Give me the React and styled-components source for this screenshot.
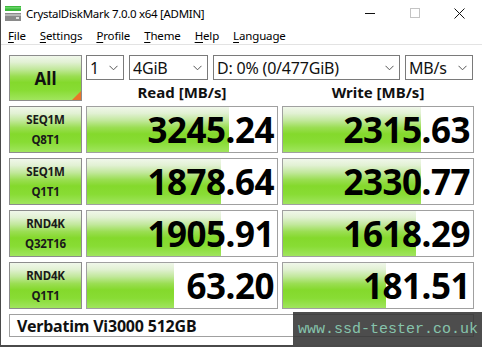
import React from "react";
import styled, { createGlobalStyle } from "styled-components";

const Global = createGlobalStyle`
  html, body { margin: 0; padding: 0; background: #ffffff; }
  body { font-family: "Noto Sans", "Open Sans", sans-serif; color: #000; }
`;

const Window = styled.div`
  position: relative;
  width: 482px;
  height: 347px;
  box-sizing: border-box;
  background: #ffffff;
  border-left: 1px solid #4a4a4a;
  border-bottom: 2px solid #4a4a4a;
  overflow: hidden;
  display: flex;
  flex-direction: column;
`;

const TitleBar = styled.div`
  height: 26px;
  display: flex;
  align-items: center;
  padding-left: 4px;
`;

const TitleText = styled.span`
  margin-left: 5px;
  font-size: 11.5px;
  color: #000;
  flex: 1;
  letter-spacing: -0.3px;
`;

const WinButton = styled.div`
  width: 45px;
  height: 26px;
  display: flex;
  align-items: center;
  justify-content: center;
`;

const MenuBar = styled.div`
  height: 18px;
  display: flex;
  align-items: center;
  gap: 14px;
  padding-left: 7px;
  border-bottom: 1px solid #e3e3e3;
`;

const MenuItem = styled.span`
  font-size: 11.5px;
  letter-spacing: -0.15px;
  u { text-decoration: underline; text-underline-offset: 2px; }
`;

const Content = styled.div`
  display: grid;
  grid-template-columns: 73px 192px 192px;
  grid-template-rows: 46px repeat(4, 47px) 23px;
  column-gap: 4px;
  row-gap: 5px;
  padding: 10px 0 0 8px;
`;

const greenGrad = `linear-gradient(to bottom, #f0f7ea 0%, #e2f1d4 14%, #c2e89c 30%, #9ade52 46%, #84d92c 60%, #88dc34 78%, #a0e55e 100%)`;

const AllButton = styled.div`
  position: relative;
  box-sizing: border-box;
  border: 1px solid #8c8c8c;
  background: ${greenGrad};
  display: flex;
  align-items: center;
  justify-content: center;
  font-weight: 700;
  font-size: 17px;
  color: #111;
  overflow: hidden;
  &::after {
    content: "";
    position: absolute;
    right: 0;
    bottom: 0;
    border-style: solid;
    border-width: 0 0 9px 9px;
    border-color: transparent transparent #e8762a transparent;
  }
`;

const TopRight = styled.div`
  grid-column: 2 / 4;
  display: grid;
  grid-template-columns: 192px 192px;
  grid-template-rows: 25px 21px;
  column-gap: 4px;
`;

const Combos = styled.div`
  grid-column: 1 / 3;
  display: flex;
  gap: 5px;
`;

const Combo = styled.div`
  box-sizing: border-box;
  width: ${(p) => p.$w}px;
  height: 25px;
  border: 1px solid #7a7a7a;
  background: #fff;
  display: flex;
  align-items: center;
  padding-left: 3px;
  padding-right: 5px;
  font-size: 16px;
  letter-spacing: -0.2px;
  color: #111;
  span { flex: 1; white-space: nowrap; }
`;

const Header = styled.div`
  display: flex;
  align-items: center;
  justify-content: center;
  font-weight: 700;
  font-size: 15px;
  color: #111;
  padding-top: 2px;
`;

const Label = styled.div`
  box-sizing: border-box;
  border: 1px solid #8c8c8c;
  background: ${greenGrad};
  display: flex;
  flex-direction: column;
  align-items: center;
  justify-content: center;
  font-weight: 700;
  font-size: 11.5px;
  line-height: 20px;
  color: #1a1a1a;
  letter-spacing: -0.2px;
`;

const Value = styled.div`
  box-sizing: border-box;
  border: 1px solid #a0a0a0;
  background-color: #fff;
  background-image: ${greenGrad};
  background-repeat: no-repeat;
  display: flex;
  align-items: center;
  justify-content: flex-end;
  padding-right: 3px;
  font-weight: 700;
  font-size: 35px;
  letter-spacing: -0.5px;
  color: #000;
  line-height: 1;
`;

const Comment = styled.div`
  grid-column: 1 / 4;
  box-sizing: border-box;
  border: 1px solid #a0a0a0;
  display: flex;
  align-items: center;
  padding-left: 7px;
  font-weight: 700;
  font-size: 16px;
  color: #111;
  letter-spacing: -0.2px;
`;

const Watermark = styled.div`
  position: absolute;
  left: 292px;
  top: 312px;
  width: 190px;
  height: 35px;
  background: rgba(52, 52, 52, 0.88);
  display: flex;
  align-items: center;
  padding-left: 5px;
  box-sizing: border-box;
  font-family: "Liberation Mono", "DejaVu Sans Mono", monospace;
  font-size: 15px;
  color: #86c4ac;
`;

const Chevron = () => (
  <svg width="9" height="6" viewBox="0 0 9 6">
    <path d="M0.5 0.8 L4.5 4.8 L8.5 0.8" fill="none" stroke="#555" strokeWidth="1" />
  </svg>
);

const AppIcon = () => (
  <svg width="16" height="15" viewBox="0 0 16 15">
    <rect x="0" y="0" width="16" height="5" fill="#3cb83c" />
    <rect x="0" y="1" width="16" height="1.5" fill="#66d466" />
    <rect x="0" y="7" width="16" height="8" fill="#8a8a8a" />
    <rect x="0" y="8" width="16" height="2" fill="#b8b8b8" />
    <rect x="11" y="11" width="3" height="2" fill="#dddddd" />
  </svg>
);

const rows = [
  { l1: "SEQ1M", l2: "Q8T1", r: "3245.24", w: "2315.63", rw: 142, ww: 138 },
  { l1: "SEQ1M", l2: "Q1T1", r: "1878.64", w: "2330.77", rw: 134, ww: 138 },
  { l1: "RND4K", l2: "Q32T16", r: "1905.91", w: "1618.29", rw: 134, ww: 133 },
  { l1: "RND4K", l2: "Q1T1", r: "63.20", w: "181.51", rw: 87, ww: 103 },
];

export default function App() {
  return (
    <>
      <Global />
      <Window>
        <TitleBar>
          <AppIcon />
          <TitleText>CrystalDiskMark 7.0.0 x64 [ADMIN]</TitleText>
          <WinButton>
            <svg width="10" height="10" viewBox="0 0 10 10">
              <path d="M0 5.5 H10" stroke="#111" strokeWidth="1" />
            </svg>
          </WinButton>
          <WinButton>
            <svg width="10" height="10" viewBox="0 0 10 10">
              <rect x="0.5" y="0.5" width="9" height="9" fill="none" stroke="#c4c4c4" strokeWidth="1" />
            </svg>
          </WinButton>
          <WinButton>
            <svg width="11" height="11" viewBox="0 0 11 11">
              <path d="M0.5 0.5 L10.5 10.5 M10.5 0.5 L0.5 10.5" stroke="#111" strokeWidth="1" />
            </svg>
          </WinButton>
        </TitleBar>
        <MenuBar>
          <MenuItem><u>F</u>ile</MenuItem>
          <MenuItem><u>S</u>ettings</MenuItem>
          <MenuItem><u>P</u>rofile</MenuItem>
          <MenuItem><u>T</u>heme</MenuItem>
          <MenuItem><u>H</u>elp</MenuItem>
          <MenuItem><u>L</u>anguage</MenuItem>
        </MenuBar>
        <Content>
          <AllButton>All</AllButton>
          <TopRight>
            <Combos>
              <Combo $w={38}><span>1</span><Chevron /></Combo>
              <Combo $w={79}><span>4GiB</span><Chevron /></Combo>
              <Combo $w={187}><span>D: 0% (0/477GiB)</span><Chevron /></Combo>
              <Combo $w={68}><span>MB/s</span><Chevron /></Combo>
            </Combos>
            <Header>Read [MB/s]</Header>
            <Header>Write [MB/s]</Header>
          </TopRight>
          {rows.map((r, i) => (
            <React.Fragment key={i}>
              <Label>
                <div>{r.l1}</div>
                <div>{r.l2}</div>
              </Label>
              <Value style={{ backgroundSize: `${r.rw}px 100%` }}>{r.r}</Value>
              <Value style={{ backgroundSize: `${r.ww}px 100%` }}>{r.w}</Value>
            </React.Fragment>
          ))}
          <Comment>Verbatim Vi3000 512GB</Comment>
        </Content>
        <Watermark>www.ssd-tester.co.uk</Watermark>
      </Window>
    </>
  );
}
